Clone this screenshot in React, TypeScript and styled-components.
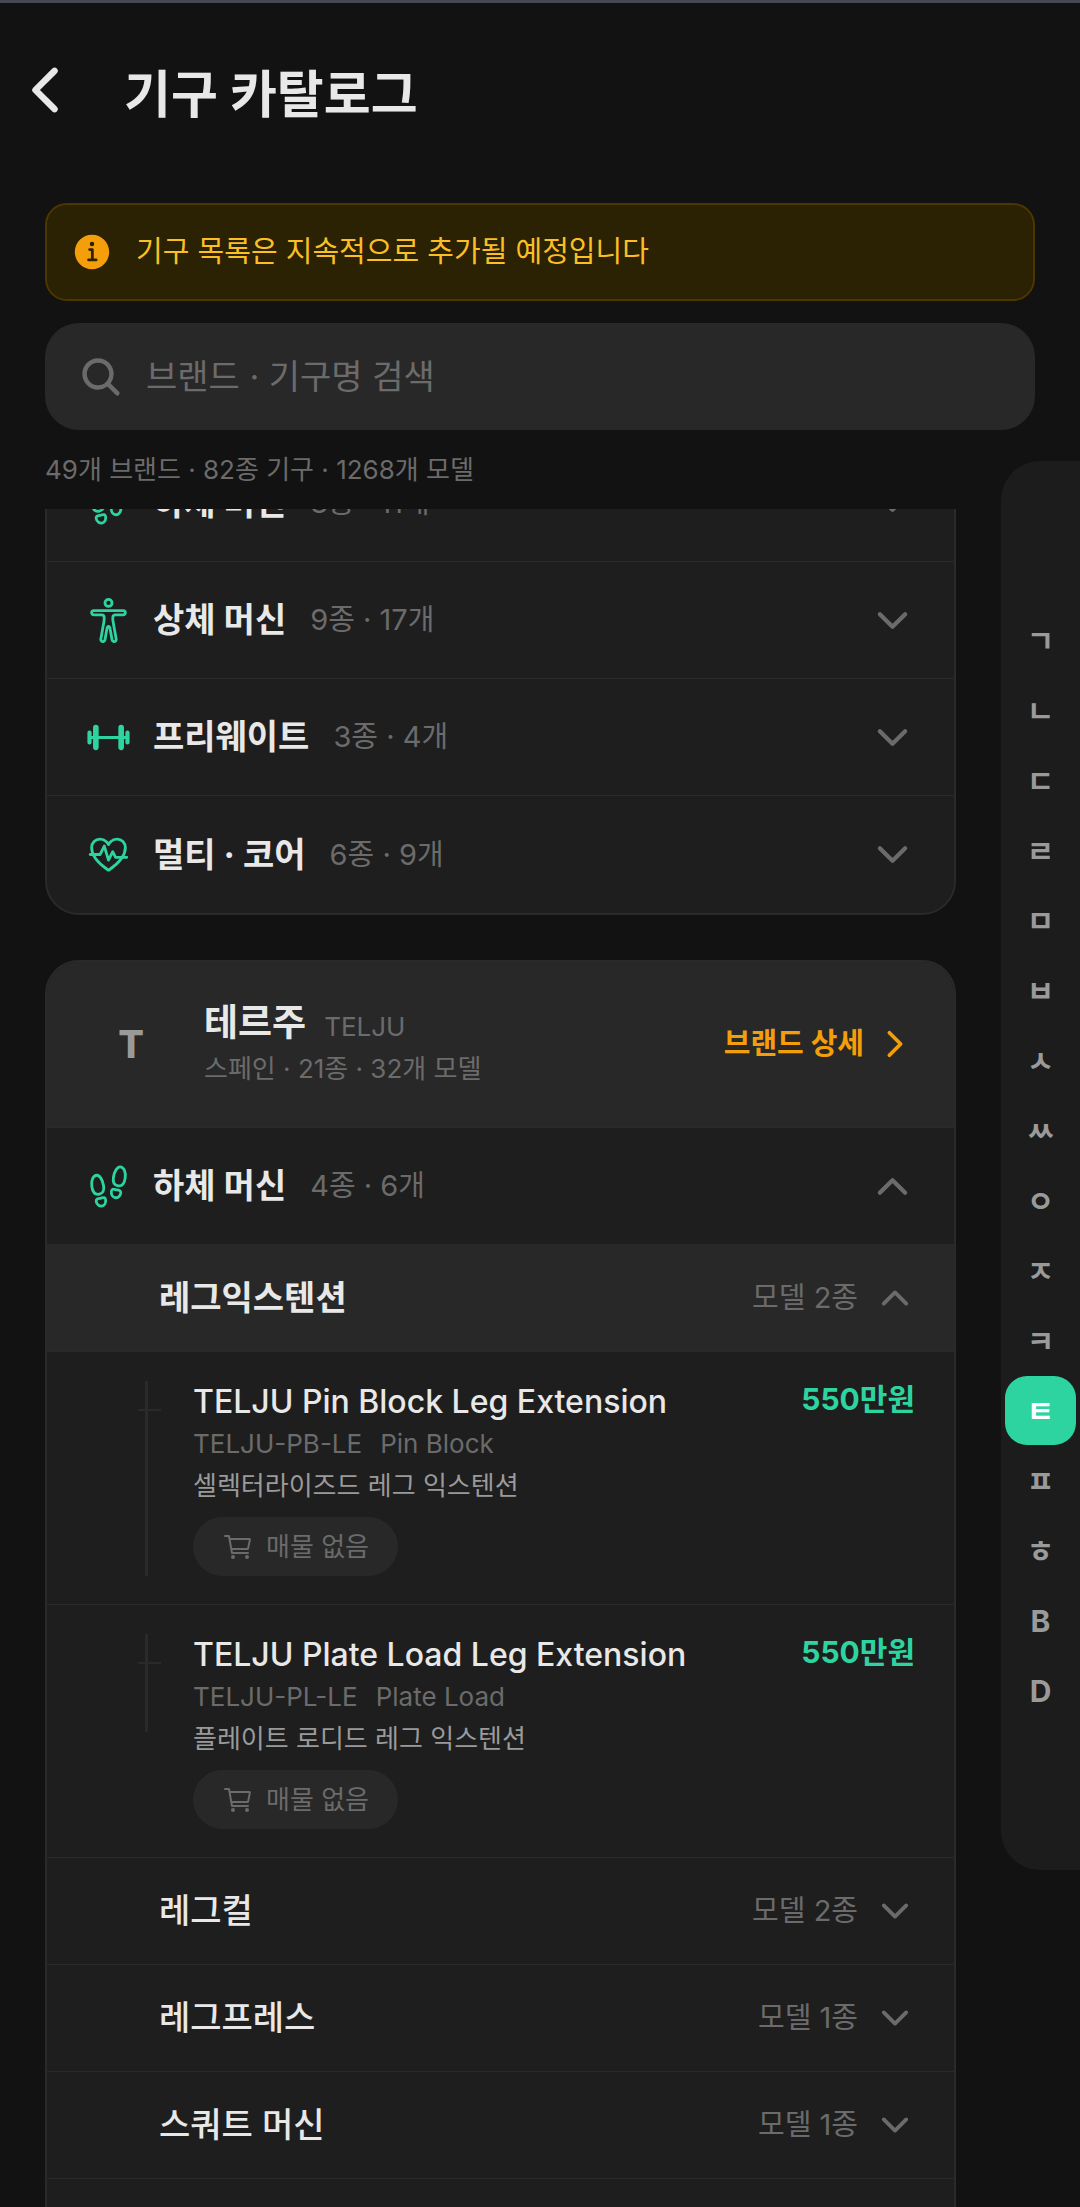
import React, { useLayoutEffect, useRef } from "react";
import styled, { createGlobalStyle, css } from "styled-components";
import {
  IoBarbellOutline,
  IoBodyOutline,
  IoCartOutline,
  IoChevronBack,
  IoChevronDown,
  IoChevronForward,
  IoChevronUp,
  IoFitnessOutline,
  IoFootstepsOutline,
  IoInformationCircle,
  IoSearch,
} from "react-icons/io5";

const color = {
  page: "#121212",
  surface: "#1e1e1e",
  raised: "#282828",
  line: "#2a2a2a",
  text: "#e8e8e8",
  soft: "#9a9a9a",
  muted: "#6b6b6b",
  green: "#2dd4a0",
  amber: "#f59e0b",
};

const GlobalStyle = createGlobalStyle`
  *, *::before, *::after { box-sizing: border-box; }
  body {
    margin: 0;
    background: ${color.page};
    color: ${color.text};
    font-family: Inter, "Noto Sans CJK KR", sans-serif;
  }
  button, input { font: inherit; color: inherit; }
  button { margin: 0; padding: 0; border: 0; background: none; text-align: left; cursor: pointer; }
  h1, h2, h3, p, ul { margin: 0; padding: 0; font-weight: inherit; }
  ul { list-style: none; }
  svg { display: block; flex: none; }
`;

const Screen = styled.div`
  position: relative;
  display: flex;
  flex-direction: column;
  height: 100vh;
  overflow: hidden;
  border-top: 3px solid #464854;
`;

const Header = styled.header`
  display: flex;
  align-items: flex-start;
  gap: 45px;
  padding: 53px 11px 49px;
`;

const Title = styled.h1`
  font-size: 51px;
  line-height: 78px;
  font-weight: 700;
`;

const Tools = styled.div`
  display: flex;
  flex-direction: column;
  gap: 22px;
  padding: 20px 45px 21px;
`;

const Notice = styled.p`
  display: flex;
  align-items: center;
  gap: 22px;
  padding: 25px 23px;
  border: 2px solid #4d3600;
  border-radius: 22px;
  background: #2b2103;
  color: #fbbf24;
  font-size: 29px;
  line-height: 42px;

  svg { color: ${color.amber}; }
`;

const SearchBox = styled.label`
  display: flex;
  align-items: center;
  gap: 22px;
  height: 107px;
  padding: 0 33px;
  border-radius: 34px;
  background: ${color.raised};
  color: ${color.muted};
`;

const SearchInput = styled.input`
  flex: 1;
  min-width: 0;
  padding: 0;
  border: 0;
  outline: 0;
  background: none;
  color: ${color.text};
  font-size: 34px;
  line-height: 48px;

  &::placeholder { color: ${color.muted}; opacity: 1; }
`;

const Summary = styled.p`
  color: ${color.muted};
  font-size: 26px;
  line-height: 36px;
`;

const List = styled.main`
  flex: 1;
  min-height: 0;
  display: flex;
  flex-direction: column;
  gap: 45px;
  padding: 0 124px 0 45px;
  overflow-y: auto;
  scrollbar-width: none;
`;

const Card = styled.section<{ $tail?: boolean }>`
  flex: none;
  overflow: hidden;
  border: 2px solid ${color.line};
  border-radius: 34px;
  background: ${color.surface};
  ${(p) => p.$tail && css`padding-bottom: 107px;`}
`;

const BrandHead = styled.header`
  display: flex;
  align-items: center;
  padding: 36px 39px;
  border-bottom: 2px solid ${color.line};
  background: ${color.raised};
`;

const Monogram = styled.span`
  width: 90px;
  margin-right: 28px;
  color: ${color.soft};
  font-size: 38px;
  line-height: 48px;
  font-weight: 800;
  text-align: center;
`;

const BrandText = styled.div`
  flex: 1;
  min-width: 0;
`;

const BrandName = styled.h2`
  display: flex;
  align-items: baseline;
  gap: 18px;
  height: 50px;
  font-size: 37px;
  line-height: 50px;
  font-weight: 700;
`;

const Caption = styled.span<{ $tone?: "soft" }>`
  display: block;
  color: ${(p) => (p.$tone === "soft" ? color.soft : color.muted)};
  font-size: 26px;
  line-height: 42px;
  font-weight: 400;
`;

const BrandLink = styled.a`
  display: flex;
  align-items: center;
  gap: 11px;
  color: ${color.amber};
  font-size: 29px;
  line-height: 40px;
  font-weight: 700;
  text-decoration: none;
`;

const CategoryRow = styled.button<{ $last?: boolean }>`
  display: flex;
  align-items: center;
  width: 100%;
  height: 117px;
  padding: 0 39px;
  border-bottom: ${(p) => (p.$last ? "0" : `1px solid ${color.line}`)};
  color: ${color.muted};

  > svg:first-child { color: ${color.green}; }
`;

const CategoryName = styled.span`
  margin: 0 24px 0 22px;
  color: ${color.text};
  font-size: 34px;
  line-height: 48px;
  font-weight: 700;
`;

const Count = styled.span`
  flex: 1;
  font-size: 29px;
  line-height: 40px;
`;

const KindRow = styled.button<{ $open?: boolean }>`
  display: flex;
  align-items: center;
  gap: 17px;
  width: 100%;
  height: 107px;
  padding: 0 39px 0 112px;
  border-bottom: 1px solid ${color.line};
  background: ${(p) => (p.$open ? color.raised : "transparent")};
  color: ${color.muted};
  font-size: 29px;
  line-height: 40px;
`;

const KindName = styled.span<{ $open?: boolean }>`
  flex: 1;
  color: ${color.text};
  font-size: 34px;
  line-height: 48px;
  font-weight: ${(p) => (p.$open ? 700 : 500)};
`;

const ModelItem = styled.li`
  display: flex;
  align-items: flex-start;
  padding: 29px 39px 28px 91px;
  border-bottom: 1px solid ${color.line};
`;

const Branch = styled.span<{ $last?: boolean }>`
  position: relative;
  align-self: stretch;
  width: 23px;
  margin-right: 32px;

  &::before {
    content: "";
    position: absolute;
    top: 0;
    left: 7px;
    width: 3px;
    height: ${(p) => (p.$last ? "50%" : "100%")};
    background: ${color.line};
  }

  &::after {
    content: "";
    position: absolute;
    top: 28px;
    left: 0;
    width: 23px;
    height: 2px;
    background: ${color.line};
  }
`;

const ModelBody = styled.div`
  flex: 1;
  min-width: 0;
  display: flex;
  flex-direction: column;
  align-items: flex-start;
`;

const ModelName = styled.h3`
  font-size: 32px;
  line-height: 42px;
  font-weight: 500;
`;

const ModelCodes = styled.div`
  display: flex;
  gap: 18px;
`;

const Stock = styled.span`
  display: flex;
  align-items: center;
  gap: 12px;
  height: 59px;
  margin-top: 10px;
  padding: 0 29px;
  border-radius: 30px;
  background: ${color.raised};
  color: ${color.muted};
  font-size: 26px;
  line-height: 36px;
`;

const Price = styled.strong`
  color: ${color.green};
  font-size: 30px;
  line-height: 36px;
  font-weight: 700;
`;

const IndexBar = styled.nav`
  position: absolute;
  top: 458px;
  right: 0;
  display: flex;
  flex-direction: column;
  gap: 1px;
  padding: 145px 4px;
  border-radius: 39px 0 0 39px;
  background: #1c1c1c;
`;

const IndexKey = styled.button<{ $active?: boolean }>`
  width: 71px;
  height: 69px;
  border-radius: 22px;
  background: ${(p) => (p.$active ? color.green : "transparent")};
  color: ${(p) => (p.$active ? "#ffffff" : color.soft)};
  font-size: 30px;
  line-height: 40px;
  font-weight: 700;
  text-align: center;
`;

type Category = { name: string; count: string; Icon: React.ComponentType<{ size?: number }> };

const previousBrand: Category[] = [
  { name: "하체 머신", count: "8종 · 11개", Icon: IoFootstepsOutline },
  { name: "상체 머신", count: "9종 · 17개", Icon: IoBodyOutline },
  { name: "프리웨이트", count: "3종 · 4개", Icon: IoBarbellOutline },
  { name: "멀티 · 코어", count: "6종 · 9개", Icon: IoFitnessOutline },
];

const models = [
  { name: "TELJU Pin Block Leg Extension", code: "TELJU-PB-LE", type: "Pin Block", korean: "셀렉터라이즈드 레그 익스텐션", price: "550만원" },
  { name: "TELJU Plate Load Leg Extension", code: "TELJU-PL-LE", type: "Plate Load", korean: "플레이트 로디드 레그 익스텐션", price: "550만원" },
];

const kinds = [
  { name: "레그컬", count: "모델 2종" },
  { name: "레그프레스", count: "모델 1종" },
  { name: "스쿼트 머신", count: "모델 1종" },
];

const indexKeys = ["ㄱ", "ㄴ", "ㄷ", "ㄹ", "ㅁ", "ㅂ", "ㅅ", "ㅆ", "ㅇ", "ㅈ", "ㅋ", "ㅌ", "ㅍ", "ㅎ", "B", "D"];

function CategoryButton({ item, open, last }: { item: Category; open?: boolean; last?: boolean }) {
  const { Icon } = item;
  return (
    <CategoryRow type="button" aria-expanded={!!open} $last={last}>
      <Icon size={45} />
      <CategoryName>{item.name}</CategoryName>
      <Count>{item.count}</Count>
      {open ? <IoChevronUp size={45} /> : <IoChevronDown size={45} />}
    </CategoryRow>
  );
}

function KindButton({ name, count, open }: { name: string; count: string; open?: boolean }) {
  return (
    <KindRow type="button" aria-expanded={!!open} $open={open}>
      <KindName $open={open}>{name}</KindName>
      <span>{count}</span>
      {open ? <IoChevronUp size={40} /> : <IoChevronDown size={40} />}
    </KindRow>
  );
}

export default function App() {
  const list = useRef<HTMLElement>(null);

  // Opens with the selected brand in view, the previous one partly scrolled away.
  useLayoutEffect(() => {
    if (list.current) list.current.scrollTop = 66;
  }, []);

  return (
    <>
      <GlobalStyle />
      <Screen>
        <Header>
          <button type="button" aria-label="뒤로">
            <IoChevronBack size={68} />
          </button>
          <Title>기구 카탈로그</Title>
        </Header>

        <Tools>
          <Notice>
            <IoInformationCircle size={44} />
            기구 목록은 지속적으로 추가될 예정입니다
          </Notice>
          <SearchBox>
            <IoSearch size={46} />
            <SearchInput type="search" aria-label="검색" placeholder="브랜드 · 기구명 검색" />
          </SearchBox>
          <Summary>49개 브랜드 · 82종 기구 · 1268개 모델</Summary>
        </Tools>

        <List ref={list}>
          <Card>
            {previousBrand.map((item, i) => (
              <CategoryButton key={item.name} item={item} last={i === previousBrand.length - 1} />
            ))}
          </Card>

          <Card $tail>
            <BrandHead>
              <Monogram>T</Monogram>
              <BrandText>
                <BrandName>
                  테르주 <Caption as="small">TELJU</Caption>
                </BrandName>
                <Caption>스페인 · 21종 · 32개 모델</Caption>
              </BrandText>
              <BrandLink href="#telju">
                브랜드 상세
                <IoChevronForward size={40} />
              </BrandLink>
            </BrandHead>
            <CategoryButton item={{ name: "하체 머신", count: "4종 · 6개", Icon: IoFootstepsOutline }} open />
            <KindButton name="레그익스텐션" count="모델 2종" open />
            <ul>
              {models.map((m, i) => (
                <ModelItem key={m.code}>
                  <Branch $last={i === models.length - 1} />
                  <ModelBody>
                    <ModelName>{m.name}</ModelName>
                    <ModelCodes>
                      <Caption>{m.code}</Caption>
                      <Caption>{m.type}</Caption>
                    </ModelCodes>
                    <Caption $tone="soft">{m.korean}</Caption>
                    <Stock>
                      <IoCartOutline size={32} />
                      매물 없음
                    </Stock>
                  </ModelBody>
                  <Price>{m.price}</Price>
                </ModelItem>
              ))}
            </ul>
            {kinds.map((k) => (
              <KindButton key={k.name} name={k.name} count={k.count} />
            ))}
          </Card>
        </List>

        <IndexBar aria-label="초성 색인">
          {indexKeys.map((key) => (
            <IndexKey key={key} type="button" $active={key === "ㅌ"}>
              {key}
            </IndexKey>
          ))}
        </IndexBar>
      </Screen>
    </>
  );
}
